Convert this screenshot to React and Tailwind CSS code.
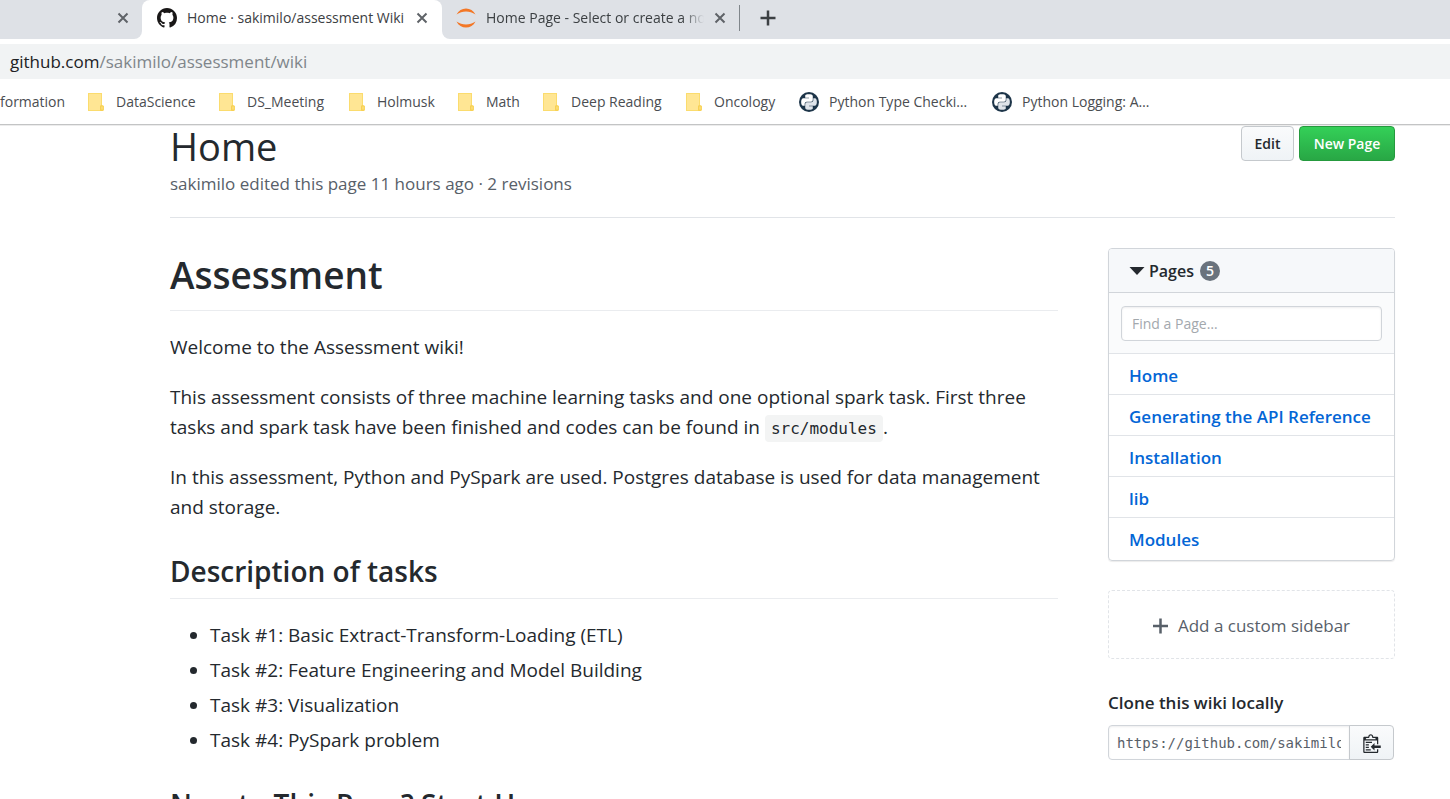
const PY_TOP =
  "M14.25.18l.9.2.73.26.59.3.45.32.34.34.25.34.16.33.1.3.04.26.02.2-.01.13V8.5l-.05.63-.13.55-.21.46-.26.38-.3.31-.33.25-.35.19-.35.14-.33.1-.3.07-.26.04-.21.02H8.77l-.69.05-.59.14-.5.22-.41.27-.33.32-.27.35-.2.36-.15.37-.1.35-.07.32-.04.27-.02.21v3.06H3.17l-.21-.03-.28-.07-.32-.12-.35-.18-.36-.26-.36-.36-.35-.46-.32-.59-.28-.73-.21-.88-.14-1.05-.05-1.23.06-1.22.16-1.04.24-.87.32-.71.36-.57.4-.44.42-.33.42-.24.4-.16.36-.1.32-.05.24-.01h.16l.06.01h8.16v-.83H6.18l-.01-2.75-.02-.37.05-.34.11-.31.17-.28.25-.26.31-.23.38-.2.44-.18.51-.15.58-.12.64-.1.71-.06.77-.04.84-.02 1.27.05z";

function GithubIcon() {
  return (
    <svg viewBox="0 0 16 16" className="size-5 shrink-0" fill="#191717" aria-hidden="true">
      <path d="M8 0C3.58 0 0 3.58 0 8c0 3.54 2.29 6.53 5.47 7.59.4.07.55-.17.55-.38 0-.19-.01-.82-.01-1.49-2.01.37-2.53-.49-2.69-.94-.09-.23-.48-.94-.82-1.13-.28-.15-.68-.52-.01-.53.63-.01 1.08.58 1.23.82.72 1.21 1.87.87 2.33.66.07-.52.28-.87.51-1.07-1.78-.2-3.64-.89-3.64-3.95 0-.87.31-1.59.82-2.15-.08-.2-.36-1.02.08-2.12 0 0 .67-.21 2.2.82.64-.18 1.32-.27 2-.27.68 0 1.36.09 2 .27 1.53-1.04 2.2-.82 2.2-.82.44 1.1.16 1.92.08 2.12.51.56.82 1.27.82 2.15 0 3.07-1.87 3.75-3.65 3.95.29.25.54.73.54 1.48 0 1.07-.01 1.93-.01 2.2 0 .21.15.46.55.38A8.013 8.013 0 0016 8c0-4.42-3.58-8-8-8z" />
    </svg>
  );
}

function PythonIcon() {
  return (
    <svg viewBox="0 0 20 20" className="size-5 shrink-0" aria-hidden="true">
      <circle cx="10" cy="10" r="10" fill="#1d3549" />
      <g transform="translate(2.2 2.2) scale(0.65)">
        <path d={PY_TOP} fill="#ffffff" />
        <path d={PY_TOP} fill="#dfe4ea" transform="rotate(180 12 12)" />
      </g>
    </svg>
  );
}

function FolderIcon() {
  return (
    <svg viewBox="0 0 16 18" className="h-[18px] w-4 shrink-0" aria-hidden="true">
      <path d="M0 0h14v12l2 1v4l-1 1H0z" fill="#fbdc6e" />
      <path d="M1 1h12v16H1z" fill="#ffe694" />
      <path d="M12 17v-4l1-1 2.500 1v4l-1 1h-2z" fill="#f7d053" />
      <path d="M13.500 13.500h1v3h-1z" fill="#ffe694" />
    </svg>
  );
}

function CloseIcon() {
  return (
    <svg viewBox="0 0 12 12" className="size-3" fill="none" stroke="#5f6368" strokeWidth="2" aria-hidden="true">
      <path d="M1.500 1.500l9 9M10.500 1.500l-9 9" />
    </svg>
  );
}

const bookmarks = [
  { label: "DataScience", width: "w-[131px]" },
  { label: "DS_Meeting", width: "w-[130px]" },
  { label: "Holmusk", width: "w-[109px]" },
  { label: "Math", width: "w-[85px]" },
  { label: "Deep Reading", width: "w-[143px]" },
  { label: "Oncology", width: "w-[113px]" },
];

const pages = ["Home", "Generating the API Reference", "Installation", "lib", "Modules"];

const tasks = [
  "Task #1: Basic Extract-Transform-Loading (ETL)",
  "Task #2: Feature Engineering and Model Building",
  "Task #3: Visualization",
  "Task #4: PySpark problem",
];

function Browser() {
  return (
    <header>
      <div className="flex h-[39px] bg-white">
        <div className="flex w-[142px] items-center justify-end rounded-br-lg bg-[#dee1e6] pr-[13px] pb-[3px]">
          <button aria-label="Close tab"><CloseIcon /></button>
        </div>
        <div className="w-[300px] bg-linear-to-b from-[#dee1e6] from-50% to-white to-50%">
          <div className="flex h-full items-center rounded-t-lg bg-white pr-[14px] pb-[3px] pl-[15px]">
            <GithubIcon />
            <span className="ml-2.5 flex-1 text-sm whitespace-nowrap text-[#3c4043]">Home · sakimilo/assessment Wiki</span>
            <button aria-label="Close tab"><CloseIcon /></button>
          </div>
        </div>
        <div className="flex flex-1 items-center rounded-bl-lg bg-[#dee1e6] pb-[3px]">
          <div className="flex h-[26px] w-[298px] items-center border-r border-[#80868b] pr-[13px] pl-[14px]">
            <svg viewBox="0 0 20 20" className="size-5 shrink-0" fill="#f37726" aria-hidden="true">
              <path d="M.5 6.500C2.500 2.500 6 .5 10 .5s7.500 2 9.500 6C16.500 4.500 13.500 3.500 10 3.500s-6.500 1-9.500 3z" />
              <path d="M.5 13.500c2 4 5.500 6 9.500 6s7.500-2 9.500-6c-3 2-6 3-9.500 3s-6.500-1-9.500-3z" />
            </svg>
            <span className="mr-2.5 ml-2.5 flex-1 overflow-hidden mask-r-from-90% text-sm whitespace-nowrap text-[#3c4043]">Home Page - Select or create a notebook</span>
            <button aria-label="Close tab"><CloseIcon /></button>
          </div>
          <button aria-label="New tab" className="ml-5">
            <svg viewBox="0 0 16 16" className="size-4" stroke="#3c4043" strokeWidth="2.500" aria-hidden="true">
              <path d="M8 .5v15M.5 8h15" />
            </svg>
          </button>
        </div>
      </div>
      <div className="mt-[5px] flex h-[35px] items-center bg-[#f1f3f4] pl-2.5 text-[17px] text-[#202124]">
        <span>github.com<span className="text-[#80868b]">/sakimilo/assessment/wiki</span></span>
      </div>
      <nav className="flex h-[46px] items-center overflow-hidden border-b border-[#c3c4c5] text-sm whitespace-nowrap text-[#4a4d51]">
        <a href="#" className="w-[88px]">formation</a>
        {bookmarks.map((b) => (
          <a key={b.label} href="#" className={`flex items-center gap-3 ${b.width}`}>
            <FolderIcon />
            {b.label}
          </a>
        ))}
        <a href="#" className="flex w-[193px] items-center gap-2.5"><PythonIcon />Python Type Checki…</a>
        <a href="#" className="flex items-center gap-2.5"><PythonIcon />Python Logging: A…</a>
      </nav>
    </header>
  );
}

function Sidebar() {
  return (
    <aside className="w-[287px] shrink-0">
      <section className="overflow-hidden rounded-[4px] border border-[#d1d5da] shadow-[0_1px_1px_rgba(0,0,0,0.08)]">
        <h3 className="flex h-11 items-center border-b border-[#d1d5da] bg-[#f6f8fa] pl-5 text-base font-semibold">
          <svg viewBox="0 0 16 8" className="mr-1 h-2 w-4" fill="#24292e" aria-hidden="true"><path d="M.5 0h15L8 8z" /></svg>
          Pages
          <span className="ml-1.5 flex size-5 items-center justify-center rounded-full bg-[#6a737d] text-sm font-semibold text-white">5</span>
        </h3>
        <div className="h-[60px] bg-[#fafbfc] px-3 py-[13px]">
          <input
            aria-label="Find a Page"
            placeholder="Find a Page…"
            className="h-[35px] w-full rounded-[4px] border border-[#d1d5da] bg-white px-2.5 text-sm shadow-[inset_0_1px_2px_rgba(27,31,35,0.075)] placeholder:text-[#a3a8ad]"
          />
        </div>
        <ul className="pb-0.5">
          {pages.map((p) => (
            <li key={p} className="flex h-[41px] items-center border-t border-[#e1e4e8] pt-1 pl-5 text-[17px] font-semibold text-[#0366d6]">
              <a href="#">{p}</a>
            </li>
          ))}
        </ul>
      </section>
      <a href="#" className="mt-[29px] flex h-[69px] items-center justify-center gap-2.5 rounded-[4px] border border-dashed border-[#e1e4e8] pt-0.5 text-[17px] text-[#586069]">
        <svg viewBox="0 0 12 16" className="h-5 w-[15px]" fill="currentColor" aria-hidden="true"><path d="M12 9H7v5H5V9H0V7h5V2h2v5h5v2z" /></svg>
        Add a custom sidebar
      </a>
      <label htmlFor="clone" className="mt-8 block text-[17px] leading-6 font-semibold">Clone this wiki locally</label>
      <div className="mt-2.5 flex h-[35px]">
        <input
          id="clone"
          readOnly
          value="https://github.com/sakimilo/assessment.wiki.git"
          className="w-[242px] rounded-l-[4px] border border-[#d1d5da] px-2 font-['DejaVu_Sans_Mono',monospace] text-sm text-[#586069] shadow-[inset_0_1px_2px_rgba(27,31,35,0.075)]"
        />
        <button aria-label="Copy to clipboard" className="-ml-px flex w-[45px] items-center justify-center rounded-r-[4px] border border-[#c5c9cd] bg-linear-to-b from-[#fafbfc] to-[#eff3f6]">
          <svg viewBox="0 0 14 16" className="h-5 w-[18px]" fill="#24292e" aria-hidden="true">
            <path d="M2 13h4v1H2v-1zm5-6H2v1h5V7zm2 3V8l-3 3 3 3v-2h5v-2H9zM4.500 9H2v1h2.500V9zM2 12h2.500v-1H2v1zm9 1h1v2c-.02.28-.11.52-.3.7-.19.18-.42.28-.7.3H1c-.55 0-1-.45-1-1V4c0-.55.45-1 1-1h3c0-1.11.89-2 2-2 1.11 0 2 .89 2 2h3c.55 0 1 .45 1 1v5h-1V6H1v9h10v-2zM2 5h8c0-.55-.45-1-1-1H8c-.55 0-1-.45-1-1s-.45-1-1-1-1 .45-1 1-.45 1-1 1H3c-.55 0-1 .45-1 1z" />
          </svg>
        </button>
      </div>
    </aside>
  );
}

export default function App() {
  return (
    <div className="h-screen overflow-hidden bg-white font-['Open_Sans','Noto_Sans',sans-serif] text-[#24292e]">
      <Browser />
      <main className="border-t border-[#ececec] pr-[55px] pl-[170px]">
        <div className="flex h-[92px] items-start justify-between border-b border-[#e1e4e8]">
          <div>
            <h1 className="text-[38px] leading-10">Home</h1>
            <p className="mt-1 text-[17px] leading-7 text-[#586069]">sakimilo edited this page 11 hours ago · 2 revisions</p>
          </div>
          <div className="flex gap-[5px] text-sm font-semibold">
            <button className="h-[35px] w-[53px] rounded-[4px] border border-[#c5c9cd] bg-linear-to-b from-[#fafbfc] to-[#eff3f6]">Edit</button>
            <button className="h-[35px] w-24 rounded-[4px] border border-[#259a3e] bg-linear-to-b from-[#34d058] to-[#28a745] text-white">New Page</button>
          </div>
        </div>
        <div className="mt-[30px] flex gap-[50px]">
          <article className="min-w-0 flex-1 text-[19px] leading-[30px]">
            <h1 className="border-b border-[#eaecef] pb-2 text-[37px] leading-[54px] font-semibold">Assessment</h1>
            <p className="mt-[21px]">Welcome to the Assessment wiki!</p>
            <p className="mt-5">
              This assessment consists of three machine learning tasks and one optional spark task. First three tasks and spark task have been finished and codes can be found in{" "}
              <code className="rounded-[4px] bg-[#f3f4f4] px-1.5 py-1 font-['DejaVu_Sans_Mono',monospace] text-base">src/modules</code>.
            </p>
            <p className="mt-5">In this assessment, Python and PySpark are used. Postgres database is used for data management and storage.</p>
            <h2 className="mt-[30px] border-b border-[#eaecef] pb-2 text-[28px] leading-[38px] font-semibold">Description of tasks</h2>
            <ul className="mt-[21px] list-disc space-y-[5px] pl-10">
              {tasks.map((t) => <li key={t}>{t}</li>)}
            </ul>
            <h2 className="mt-[30px] border-b border-[#eaecef] pb-2 text-[28px] leading-[38px] font-semibold">New to This Page? Start Here</h2>
          </article>
          <Sidebar />
        </div>
      </main>
    </div>
  );
}
